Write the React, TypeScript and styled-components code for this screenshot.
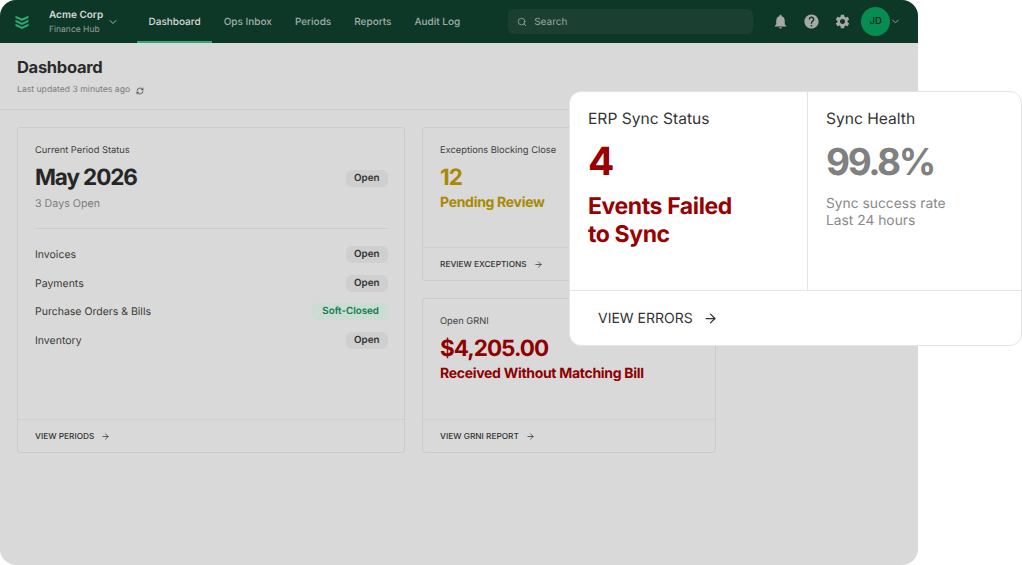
import React from 'react'
import styled, { createGlobalStyle } from 'styled-components'
import { ArrowRight, ChevronDown, RefreshCw, Search } from 'lucide-react'
import { MdHelp, MdNotifications, MdSettings } from 'react-icons/md'

const GlobalStyle = createGlobalStyle`
  html, body { margin: 0; padding: 0; background: #fff; }
  * { box-sizing: border-box; }
  body {
    font-family: Inter, "Liberation Sans", sans-serif;
    overflow: hidden;
    text-rendering: geometricPrecision;
  }
`

const Page = styled.div`
  position: relative;
  width: 1022px;
  height: 565px;
`

const Shell = styled.div`
  width: 918px;
  height: 565px;
  background: #d9d9d9;
  border-radius: 16px;
  overflow: hidden;
  display: flex;
  flex-direction: column;
`

const Nav = styled.header`
  height: 43px;
  flex: none;
  background: #0d3828;
  display: flex;
  align-items: center;
  padding-left: 15px;
`

const Org = styled.div`
  display: flex;
  align-items: center;
  margin-left: 20px;
  width: 88px;
  flex: none;
  color: #a9b4af;
`

const OrgText = styled.div`
  display: flex;
  flex-direction: column;
  gap: 3px;
  margin-right: 4px;
  padding-top: 2px;
`

const OrgName = styled.div`
  font-size: 10px;
  line-height: 13px;
  font-weight: 600;
  color: #d9d9d9;
  white-space: nowrap;
`

const OrgSub = styled.div`
  font-size: 8.5px;
  line-height: 11px;
  color: #96a39d;
  white-space: nowrap;
`

const Tabs = styled.nav`
  display: flex;
  height: 43px;
`

const Tab = styled.a<{ $active?: boolean }>`
  display: flex;
  align-items: center;
  padding: 2px 11.5px 0;
  height: 43px;
  font-size: 10px;
  font-weight: 500;
  color: ${p => (p.$active ? '#d9d9d9' : '#a3aeaa')};
  border-bottom: 2px solid ${p => (p.$active ? '#2fa873' : 'transparent')};
  white-space: nowrap;
`

const SearchBox = styled.div`
  width: 245px;
  height: 25px;
  margin-left: 36.5px;
  border-radius: 6px;
  background: #1b3f30;
  display: flex;
  align-items: center;
  gap: 7px;
  padding-left: 9px;
  color: #9aa6a1;
  font-size: 10px;
`

const Actions = styled.div`
  display: flex;
  align-items: center;
  margin-left: 19px;
  color: #a8a8a8;
  gap: 14px;
`

const AvatarGroup = styled.div`
  display: flex;
  align-items: center;
  margin-left: -4px;
`

const Avatar = styled.div`
  width: 29px;
  height: 29px;
  border-radius: 50%;
  background: #078c52;
  color: #0a1f16;
  font-size: 9.5px;
  font-weight: 500;
  display: flex;
  align-items: center;
  justify-content: center;
`

const PageHeader = styled.div`
  height: 67px;
  flex: none;
  padding: 14px 17px 0;
  border-bottom: 1px solid #cdcdcd;
`

const Title = styled.h1`
  margin: 0;
  font-size: 16.5px;
  line-height: 20px;
  font-weight: 700;
  letter-spacing: -0.3px;
  color: #2b2b2b;
`

const Updated = styled.div`
  margin-top: 8px;
  display: flex;
  align-items: center;
  gap: 6px;
  font-size: 8.65px;
  line-height: 11px;
  color: #7c7c7c;

  svg {
    color: #333;
  }
`

const Content = styled.main`
  display: grid;
  grid-template-columns: 388px 294px;
  grid-template-rows: 154px 155px;
  gap: 17px;
  padding: 17px 17px 0;
`

const Card = styled.section<{ $tall?: boolean }>`
  grid-row: ${p => (p.$tall ? '1 / span 2' : 'auto')};
  border: 1px solid #cbcbcb;
  border-radius: 3px;
  display: flex;
  flex-direction: column;
`

const CardBody = styled.div`
  flex: 1;
  padding: 17px 16px 0 17px;
`

const CardFooter = styled.div`
  height: 33px;
  flex: none;
  border-top: 1px solid #cfcfcf;
  display: flex;
  align-items: center;
  gap: 7px;
  padding: 1px 0 0 17px;
  font-size: 8.3px;
  font-weight: 500;
  color: #333;
`

const Label = styled.div`
  font-size: 9.3px;
  line-height: 12px;
  color: #3e3e3e;
`

const PeriodRow = styled.div`
  display: flex;
  align-items: center;
  justify-content: space-between;
  margin-top: 6px;
`

const PeriodValue = styled.div`
  font-size: 22.5px;
  line-height: 30px;
  font-weight: 700;
  letter-spacing: -1.1px;
  color: #262626;
`

const PeriodNote = styled.div`
  margin-top: 4px;
  font-size: 10.7px;
  line-height: 14px;
  color: #7d7d7d;
`

const Divider = styled.div`
  height: 1px;
  background: #cdcdcd;
  margin: 17px 0 17px;
`

const StatusRows = styled.div`
  display: flex;
  flex-direction: column;
  gap: 11px;
`

const StatusRow = styled.div`
  display: flex;
  align-items: center;
  justify-content: space-between;
  height: 17.5px;
  font-size: 10.5px;
  color: #3a3a3a;
`

const Badge = styled.span<{ $green?: boolean }>`
  height: 17px;
  padding: 0 ${p => (p.$green ? '9px 0 10px' : '8.5px')};
  border-radius: 6px;
  display: inline-flex;
  align-items: center;
  font-size: 9.8px;
  font-weight: 600;
  color: ${p => (p.$green ? '#0f7a4c' : '#333')};
  background: ${p => (p.$green ? '#cbdcd2' : '#cfcfcf')};
`

const Amount = styled.div<{ $color: string }>`
  margin-top: 6px;
  font-size: 22.5px;
  line-height: 30px;
  font-weight: 700;
  letter-spacing: -1px;
  color: ${p => p.$color};
`

const Note = styled.div<{ $color: string }>`
  margin-top: 1px;
  font-size: 14px;
  line-height: 18px;
  font-weight: 700;
  letter-spacing: -0.3px;
  color: ${p => p.$color};
`

const Popout = styled.aside`
  position: absolute;
  left: 569px;
  top: 91px;
  width: 453px;
  height: 255px;
  background: #fff;
  border: 1px solid #e4e4e4;
  border-radius: 12px;
  display: flex;
  flex-direction: column;
`

const PopoutColumns = styled.div`
  flex: 1;
  display: grid;
  grid-template-columns: 238px 1fr;
`

const PopoutColumn = styled.div<{ $first?: boolean }>`
  padding: 18px 18px 0;
  border-right: ${p => (p.$first ? '1px solid #e4e4e4' : 'none')};
`

const PopoutLabel = styled.div`
  font-size: 15.6px;
  line-height: 18px;
  color: #333;
`

const PopoutValue = styled.div<{ $muted?: boolean }>`
  margin-top: 9px;
  font-size: ${p => (p.$muted ? '37px' : '39px')};
  line-height: 50px;
  font-weight: 700;
  letter-spacing: ${p => (p.$muted ? '-2.4px' : '-1.5px')};
  color: ${p => (p.$muted ? '#808080' : '#9a0000')};
`

const FailedText = styled.div`
  margin-top: 5px;
  font-size: 23px;
  line-height: 28px;
  font-weight: 700;
  letter-spacing: -0.4px;
  color: #9a0000;
`

const HealthText = styled.div`
  margin-top: 9px;
  font-size: 13.8px;
  line-height: 17px;
  color: #8a8a8a;
`

const PopoutFooter = styled.div`
  height: 55px;
  flex: none;
  border-top: 1px solid #e4e4e4;
  display: flex;
  align-items: center;
  gap: 10px;
  padding-left: 28px;
  font-size: 14px;
  font-weight: 400;
  color: #333;
`

const Logo = () => (
  <svg width="14" height="14" viewBox="0 0 14 14" fill="#2fa873">
    <path d="M0.5 0.8 L7 3.6 L13.5 0.8 V3 L7 6 L0.5 3 Z" />
    <path d="M0.5 4.8 L7 7.7 L13.5 4.8 V7 L7 10 L0.5 7 Z" />
    <path d="M0.5 8.8 L7 11.7 L13.5 8.8 V11 L7 14 L0.5 11 Z" />
  </svg>
)

const tabs = ['Dashboard', 'Ops Inbox', 'Periods', 'Reports', 'Audit Log']

const rows = [
  { name: 'Invoices', status: 'Open' },
  { name: 'Payments', status: 'Open' },
  { name: 'Purchase Orders & Bills', status: 'Soft-Closed' },
  { name: 'Inventory', status: 'Open' },
]

const App = () => {
  return (
    <Page>
      <GlobalStyle />
      <Shell>
        <Nav>
          <Logo />
          <Org>
            <OrgText>
              <OrgName>Acme Corp</OrgName>
              <OrgSub>Finance Hub</OrgSub>
            </OrgText>
            <ChevronDown size={12} />
          </Org>
          <Tabs>
            {tabs.map((t, i) => (
              <Tab key={t} $active={i === 0}>{t}</Tab>
            ))}
          </Tabs>
          <SearchBox>
            <Search size={10} />
            Search
          </SearchBox>
          <Actions>
            <MdNotifications size={17} />
            <MdHelp size={17} />
            <MdSettings size={17} />
            <AvatarGroup>
              <Avatar>JD</Avatar>
              <ChevronDown size={11} />
            </AvatarGroup>
          </Actions>
        </Nav>
        <PageHeader>
          <Title>Dashboard</Title>
          <Updated>
            Last updated 3 minutes ago
            <RefreshCw size={8} />
          </Updated>
        </PageHeader>
        <Content>
          <Card $tall>
            <CardBody>
              <Label>Current Period Status</Label>
              <PeriodRow>
                <PeriodValue>May 2026</PeriodValue>
                <Badge>Open</Badge>
              </PeriodRow>
              <PeriodNote>3 Days Open</PeriodNote>
              <Divider />
              <StatusRows>
                {rows.map(r => (
                  <StatusRow key={r.name}>
                    {r.name}
                    <Badge $green={r.status === 'Soft-Closed'}>{r.status}</Badge>
                  </StatusRow>
                ))}
              </StatusRows>
            </CardBody>
            <CardFooter>
              VIEW PERIODS <ArrowRight size={9} />
            </CardFooter>
          </Card>
          <Card>
            <CardBody>
              <Label>Exceptions Blocking Close</Label>
              <Amount $color="#a88a00">12</Amount>
              <Note $color="#a88a00">Pending Review</Note>
            </CardBody>
            <CardFooter>
              REVIEW EXCEPTIONS <ArrowRight size={9} />
            </CardFooter>
          </Card>
          <Card>
            <CardBody>
              <Label>Open GRNI</Label>
              <Amount $color="#8f0000">$4,205.00</Amount>
              <Note $color="#8f0000">Received Without Matching Bill</Note>
            </CardBody>
            <CardFooter>
              VIEW GRNI REPORT <ArrowRight size={9} />
            </CardFooter>
          </Card>
        </Content>
      </Shell>
      <Popout>
        <PopoutColumns>
          <PopoutColumn $first>
            <PopoutLabel>ERP Sync Status</PopoutLabel>
            <PopoutValue>4</PopoutValue>
            <FailedText>
              Events Failed
              <br />
              to Sync
            </FailedText>
          </PopoutColumn>
          <PopoutColumn>
            <PopoutLabel>Sync Health</PopoutLabel>
            <PopoutValue $muted>99.8%</PopoutValue>
            <HealthText>
              Sync success rate
              <br />
              Last 24 hours
            </HealthText>
          </PopoutColumn>
        </PopoutColumns>
        <PopoutFooter>
          VIEW ERRORS <ArrowRight size={15} />
        </PopoutFooter>
      </Popout>
    </Page>
  )
}

export default App
